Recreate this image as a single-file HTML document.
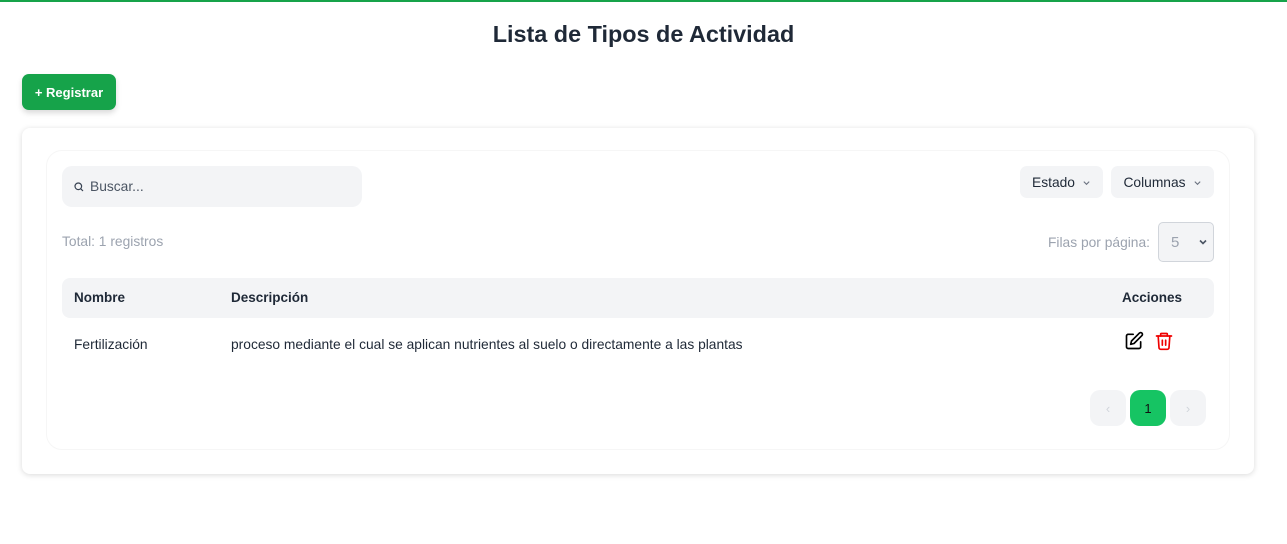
<!DOCTYPE html>
<html><head><meta charset="utf-8"><style>
*{box-sizing:border-box;margin:0;padding:0}
body{width:1287px;height:544px;background:#fff;font-family:"Liberation Sans",sans-serif;color:#1f2937;position:relative;overflow:hidden;font-size:13.8px}
.top{position:absolute;left:0;top:0;width:100%;height:2px;background:#16a34a}
h1{position:absolute;top:21px;left:0;width:100%;text-align:center;font-size:23.4px;font-weight:bold;color:#1f2937}
.reg{position:absolute;left:22px;top:74px;width:94px;height:36px;background:#16a34a;color:#fff;border-radius:7px;font-weight:bold;font-size:13px;display:flex;align-items:center;justify-content:center;box-shadow:0 3px 6px rgba(0,0,0,.15)}
.outer{position:absolute;left:22px;top:128px;width:1232px;height:346px;border-radius:8px;box-shadow:0 1px 6px rgba(0,0,0,.15);background:#fff}
.inner{position:absolute;left:46px;top:150px;width:1184px;height:300px;border-radius:16px;border:1px solid #f6f6f6;background:#fff}
.search{position:absolute;left:62px;top:166px;width:300px;height:41px;background:#f3f4f6;border-radius:10px;color:#4b5563;font-size:13.8px;display:flex;align-items:center;padding-left:12px}
.btn{position:absolute;top:166px;height:32px;background:#f3f4f6;border-radius:7px;display:flex;align-items:center;justify-content:center;font-size:13.8px;color:#1f2937}
.chev{margin-left:7px;width:9px;height:9px}
.total{position:absolute;left:62px;top:234px;color:#9ca3af}
.frow{position:absolute;left:800px;width:414px;top:222px;height:40px;display:flex;justify-content:flex-end;align-items:center;color:#9ca3af;white-space:nowrap}
.sel{position:relative;flex:none;margin-left:8px;width:56px;height:40px;background:#f3f4f6;border:1px solid #d1d5db;border-radius:5px;color:#9ca3af;font-size:15px;padding:11px 0 0 12px}
.thead{position:absolute;left:62px;top:278px;width:1152px;height:40px;background:#f3f4f6;border-radius:8px;font-weight:bold;font-size:13.5px}
.thead span,.row span{position:absolute;top:12px}
.row{position:absolute;left:62px;top:325px;width:1152px;height:40px}
.pg{position:absolute;top:390px;width:36px;height:36px;border-radius:10px;background:#f3f4f6;display:flex;align-items:center;justify-content:center;color:#d1d5db;font-size:13px}
</style></head><body>
<div class="top"></div>
<h1>Lista de Tipos de Actividad</h1>
<div class="reg">+ Registrar</div>
<div class="outer"></div>
<div class="inner"></div>
<div class="search"><svg width="10" height="10" viewBox="0 0 10 10" style="margin-right:6px"><circle cx="4.3" cy="4.3" r="3.3" fill="none" stroke="#374151" stroke-width="1.2"/><path d="M6.8 6.8L9 9" stroke="#374151" stroke-width="1.2"/></svg>Buscar...</div>
<div class="btn" style="left:1020px;width:83px">Estado<svg class="chev" viewBox="0 0 10 10"><path d="M2 4l3 3 3-3" fill="none" stroke="#6b7280" stroke-width="1.2"/></svg></div>
<div class="btn" style="left:1111px;width:103px">Columnas<svg class="chev" viewBox="0 0 10 10"><path d="M2 4l3 3 3-3" fill="none" stroke="#6b7280" stroke-width="1.2"/></svg></div>
<div class="total">Total: 1 registros</div>
<div class="frow"><span>Filas por página:</span><div class="sel">5<svg width="10" height="10" viewBox="0 0 10 10" style="position:absolute;right:5px;top:14px"><path d="M2 3.5l3 3 3-3" fill="none" stroke="#4b5563" stroke-width="1.6"/></svg></div></div>
<div class="thead"><span style="left:12px">Nombre</span><span style="left:169px">Descripción</span><span style="left:1060px">Acciones</span></div>
<div class="row"><span style="left:12px">Fertilización</span><span style="left:169px">proceso mediante el cual se aplican nutrientes al suelo o directamente a las plantas</span>
<svg style="position:absolute;left:1062px;top:6px" width="20" height="20" viewBox="0 0 24 24" fill="none" stroke="#000" stroke-width="2" stroke-linecap="round" stroke-linejoin="round"><path d="M11 4H5a2 2 0 0 0-2 2v13a2 2 0 0 0 2 2h13a2 2 0 0 0 2-2v-6"/><path d="M18.5 2.5a2.1 2.1 0 0 1 3 3L12 15l-4 1 1-4z"/></svg>
<svg style="position:absolute;left:1092px;top:6px" width="20" height="20" viewBox="0 0 24 24" fill="none" stroke="#ef0000" stroke-width="2" stroke-linecap="round" stroke-linejoin="round"><path d="M3 6h18"/><path d="M8 6V4a1 1 0 0 1 1-1h6a1 1 0 0 1 1 1v2"/><path d="M5 6l1 14a2 2 0 0 0 2 2h8a2 2 0 0 0 2-2l1-14"/><path d="M10 11v6M14 11v6"/></svg>
</div>
<div class="pg" style="left:1090px">‹</div>
<div class="pg" style="left:1130px;background:#16c463;color:#111">1</div>
<div class="pg" style="left:1170px">›</div>
</body></html>
